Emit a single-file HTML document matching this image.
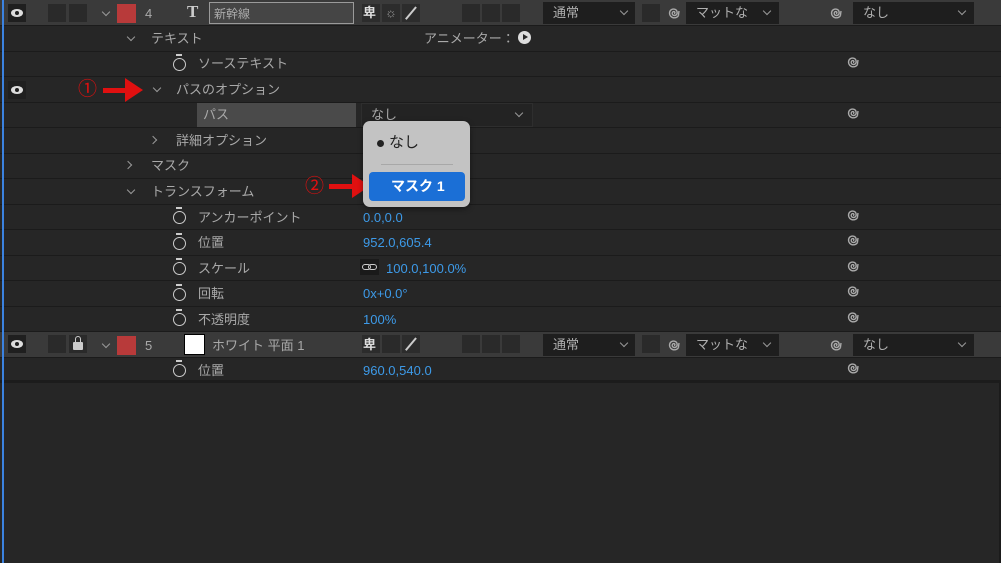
<!DOCTYPE html>
<html><head><meta charset="utf-8"><style>
*{margin:0;padding:0;box-sizing:border-box}
body{width:1001px;height:563px;background:#262626;position:relative;overflow:hidden;font-family:"Liberation Sans","Noto Sans CJK JP",sans-serif;font-size:13px;color:#a9a9a9}
.a{position:absolute}
.row{position:absolute;left:0;width:1001px;background:#262626;border-bottom:1px solid #1b1b1b}
.lay{background:#3a3a3a}
.t{position:absolute;white-space:nowrap;line-height:14px}
.b{color:#3d9ae8}
.sq{position:absolute;width:18px;height:18px;background:#2a2a2a}
.dd{position:absolute;background:#1e1e1e;height:22px;color:#b0b0b0;padding-left:10px;line-height:22px}
.chev{position:absolute;width:6px;height:6px;border-right:1.3px solid #999;border-bottom:1.3px solid #999;transform:rotate(45deg)}
.chr{position:absolute;width:6px;height:6px;border-right:1.3px solid #999;border-bottom:1.3px solid #999;transform:rotate(-45deg)}
.eye{position:absolute;width:18px;height:18px;background:#1f1f1f}
.eye:after{content:"";position:absolute;left:3px;top:5px;width:12px;height:8px;border-radius:50%;background:#ddd}
.eye:before{content:"";position:absolute;left:7px;top:7px;width:4px;height:4px;border-radius:50%;background:#1f1f1f;z-index:2}
.sw1{position:absolute;width:13px;height:13px;border:1.5px solid #ccc;border-radius:50%}
.sw1:before{content:"";position:absolute;left:2px;top:-5px;width:6px;height:2px;background:#ccc}
.sp{position:absolute;width:14px;height:14px}
</style></head><body>
<svg width="0" height="0" style="position:absolute"><defs><symbol id="s" viewBox="0 0 14 14"><path d="M7 7.5 C8 7.5 8.3 6 7.2 5.6 C5.8 5.2 5 6.6 5.3 8 C5.7 9.6 8 10 9.3 8.8 C10.8 7.3 10.3 4.3 8.2 3.4 C5.8 2.4 3 3.6 2.6 6.4 C2.2 9.4 4.4 11.8 7.4 11.8 C9 11.8 10.6 11 11.4 9.6 M11.4 9.6 L12 5" fill="none" stroke="#aaa" stroke-width="1.4"/></symbol></defs></svg>
<div class="a" style="left:2px;top:0;width:1.5px;height:563px;background:#3b82e0;z-index:9"></div>
<div class="a" style="right:0;top:0;width:2px;height:563px;background:#1b1b1b"></div>

<!-- row 4 layer -->
<div class="row lay" style="top:0;height:26px"></div>
<div class="eye" style="left:8px;top:4px"></div>
<div class="sq" style="left:48px;top:4px"></div><div class="sq" style="left:69px;top:4px"></div>
<div class="chev" style="left:103px;top:9px"></div>
<div class="a" style="left:117px;top:4px;width:19px;height:19px;background:#b83a3a"></div>
<div class="t" style="left:145px;top:7px">4</div>
<div class="t" style="left:187px;top:5px;font-family:'Liberation Serif',serif;font-size:17px;font-weight:bold;color:#ccc">T</div>
<div class="a" style="left:209px;top:2px;width:145px;height:22px;border:1.5px solid #9a9a9a;background:#454545"></div>
<div class="t" style="left:214px;top:7px;font-size:12px;color:#aaa">新幹線</div>
<div class="sq" style="left:362px;top:4px;background:#2c2c2c"></div><div class="t" style="left:363px;top:6px;color:#ddd;font-weight:bold">卑</div>
<div class="sq" style="left:382px;top:4px;background:#2c2c2c"></div><div class="t" style="left:385px;top:6px;color:#999">☼</div>
<div class="sq" style="left:402px;top:4px;background:#2c2c2c"></div><div class="a" style="left:410px;top:5px;width:1.5px;height:16px;background:#ccc;transform:rotate(40deg)"></div>
<div class="sq" style="left:462px;top:4px"></div><div class="sq" style="left:482px;top:4px"></div><div class="sq" style="left:502px;top:4px"></div>
<div class="dd" style="left:543px;top:2px;width:92px">通常</div><div class="chev" style="left:621px;top:8px"></div>
<div class="sq" style="left:642px;top:4px"></div>
<svg class="sp" style="left:667px;top:6px"><use href="#s"/></svg>
<div class="dd" style="left:686px;top:2px;width:93px">マットな</div><div class="chev" style="left:764px;top:8px"></div>
<svg class="sp" style="left:829px;top:6px"><use href="#s"/></svg>
<div class="dd" style="left:853px;top:2px;width:121px">なし</div><div class="chev" style="left:959px;top:8px"></div>

<!-- sub rows -->
<div class="row" style="top:26px;height:26px"></div>
<div class="chev" style="left:128px;top:34px"></div>
<div class="t" style="left:151px;top:32px">テキスト</div>
<div class="t" style="left:424px;top:32px">アニメーター：</div>
<div class="a" style="left:518px;top:31px;width:13px;height:13px;border-radius:50%;background:#ddd"></div>
<div class="a" style="left:523px;top:34px;border-left:5px solid #262626;border-top:3.5px solid transparent;border-bottom:3.5px solid transparent"></div>

<div class="row" style="top:52px;height:25px"></div>
<div class="sw1" style="left:173px;top:58px"></div>
<div class="t" style="left:198px;top:57px">ソーステキスト</div>
<svg class="sp" style="left:846px;top:55px"><use href="#s"/></svg>

<div class="row" style="top:77px;height:26px"></div>
<div class="eye" style="left:8px;top:81px"></div>
<div class="t" style="left:78px;top:80px;color:#e01010;font-size:19px;line-height:20px">①</div>
<div class="a" style="left:103px;top:88px;width:24px;height:5px;background:#e01010"></div>
<div class="a" style="left:125px;top:78px;border-left:18px solid #e01010;border-top:12px solid transparent;border-bottom:12px solid transparent"></div>
<div class="chev" style="left:154px;top:85px"></div>
<div class="t" style="left:176px;top:83px">パスのオプション</div>

<div class="row" style="top:103px;height:25px"></div>
<div class="a" style="left:197px;top:103px;width:159px;height:24px;background:#4a4a4a"></div>
<div class="t" style="left:203px;top:108px">パス</div>
<div class="a" style="left:361px;top:103px;width:172px;height:24px;background:#232323;border:1px solid #2e2e2e"></div>
<div class="t" style="left:371px;top:108px">なし</div>
<div class="chev" style="left:516px;top:110px"></div>
<svg class="sp" style="left:846px;top:106px"><use href="#s"/></svg>

<div class="row" style="top:128px;height:26px"></div>
<div class="chr" style="left:150px;top:137px"></div>
<div class="t" style="left:176px;top:134px">詳細オプション</div>

<div class="row" style="top:154px;height:25px"></div>
<div class="chr" style="left:125px;top:162px"></div>
<div class="t" style="left:151px;top:159px">マスク</div>

<div class="row" style="top:179px;height:26px"></div>
<div class="chev" style="left:128px;top:187px"></div>
<div class="t" style="left:151px;top:185px">トランスフォーム</div>
<div class="t" style="left:305px;top:177px;color:#e01010;font-size:19px;line-height:20px">②</div>
<div class="a" style="left:329px;top:184px;width:24px;height:5px;background:#e01010"></div>
<div class="a" style="left:352px;top:174px;border-left:18px solid #e01010;border-top:12px solid transparent;border-bottom:12px solid transparent"></div>

<div class="row" style="top:205px;height:25px"></div>
<div class="sw1" style="left:173px;top:211px"></div>
<div class="t" style="left:198px;top:211px">アンカーポイント</div>
<div class="t b" style="left:363px;top:211px">0.0,0.0</div>
<svg class="sp" style="left:846px;top:208px"><use href="#s"/></svg>

<div class="row" style="top:230px;height:26px"></div>
<div class="sw1" style="left:173px;top:237px"></div>
<div class="t" style="left:198px;top:236px">位置</div>
<div class="t b" style="left:363px;top:236px">952.0,605.4</div>
<svg class="sp" style="left:846px;top:233px"><use href="#s"/></svg>

<div class="row" style="top:256px;height:25px"></div>
<div class="sw1" style="left:173px;top:262px"></div>
<div class="t" style="left:198px;top:262px">スケール</div>
<div class="a" style="left:360px;top:259px;width:19px;height:16px;background:#1a1a1a"></div>
<div class="a" style="left:362px;top:264px;width:9px;height:6px;border:1.5px solid #ccc;border-radius:3px"></div>
<div class="a" style="left:368px;top:264px;width:9px;height:6px;border:1.5px solid #ccc;border-radius:3px"></div>
<div class="t b" style="left:386px;top:262px">100.0,100.0%</div>
<svg class="sp" style="left:846px;top:259px"><use href="#s"/></svg>

<div class="row" style="top:281px;height:26px"></div>
<div class="sw1" style="left:173px;top:288px"></div>
<div class="t" style="left:198px;top:287px">回転</div>
<div class="t b" style="left:363px;top:287px">0x+0.0°</div>
<svg class="sp" style="left:846px;top:284px"><use href="#s"/></svg>

<div class="row" style="top:307px;height:25px"></div>
<div class="sw1" style="left:173px;top:313px"></div>
<div class="t" style="left:198px;top:313px">不透明度</div>
<div class="t b" style="left:363px;top:313px">100%</div>
<svg class="sp" style="left:846px;top:310px"><use href="#s"/></svg>

<!-- layer 5 -->
<div class="row lay" style="top:332px;height:26px"></div>
<div class="eye" style="left:8px;top:335px"></div>
<div class="sq" style="left:48px;top:335px"></div>
<div class="sq" style="left:69px;top:335px"></div>
<div class="a" style="left:73px;top:342px;width:10px;height:8px;background:#ccc;border-radius:1px"></div>
<div class="a" style="left:75px;top:336px;width:6px;height:8px;border:1.5px solid #ccc;border-radius:3px 3px 0 0"></div>
<div class="chev" style="left:103px;top:341px"></div>
<div class="a" style="left:117px;top:336px;width:19px;height:19px;background:#b83a3a"></div>
<div class="t" style="left:145px;top:339px">5</div>
<div class="a" style="left:184px;top:334px;width:21px;height:21px;background:#fff;border:1px solid #000"></div>
<div class="t" style="left:212px;top:339px">ホワイト 平面 1</div>
<div class="sq" style="left:362px;top:335px;background:#2c2c2c"></div><div class="t" style="left:363px;top:338px;color:#ddd;font-weight:bold">卑</div>
<div class="sq" style="left:382px;top:335px"></div>
<div class="sq" style="left:402px;top:335px;background:#2c2c2c"></div><div class="a" style="left:410px;top:336px;width:1.5px;height:16px;background:#ccc;transform:rotate(40deg)"></div>
<div class="sq" style="left:462px;top:335px"></div><div class="sq" style="left:482px;top:335px"></div><div class="sq" style="left:502px;top:335px"></div>
<div class="dd" style="left:543px;top:334px;width:92px">通常</div><div class="chev" style="left:621px;top:340px"></div>
<div class="sq" style="left:642px;top:335px"></div>
<svg class="sp" style="left:667px;top:338px"><use href="#s"/></svg>
<div class="dd" style="left:686px;top:334px;width:93px">マットな</div><div class="chev" style="left:764px;top:340px"></div>
<svg class="sp" style="left:829px;top:338px"><use href="#s"/></svg>
<div class="dd" style="left:853px;top:334px;width:121px">なし</div><div class="chev" style="left:959px;top:340px"></div>

<div class="row" style="top:358px;height:25px;border-bottom:3px solid #1c1c1c"></div>
<div class="sw1" style="left:173px;top:364px"></div>
<div class="t" style="left:198px;top:364px">位置</div>
<div class="t b" style="left:363px;top:364px">960.0,540.0</div>
<svg class="sp" style="left:846px;top:361px"><use href="#s"/></svg>

<!-- popup -->
<div class="a" style="left:363px;top:121px;width:107px;height:86px;background:#c3c3c3;border-radius:7px;box-shadow:0 2px 6px rgba(0,0,0,.4)"></div>
<div class="a" style="left:377px;top:140px;width:7px;height:7px;border-radius:50%;background:#222"></div>
<div class="t" style="left:389px;top:134px;color:#222;font-size:15px;line-height:18px">なし</div>
<div class="a" style="left:381px;top:164px;width:72px;height:1px;background:#a8a8a8"></div>
<div class="a" style="left:369px;top:172px;width:96px;height:29px;background:#1b6fd6;border-radius:4px"></div>
<div class="t" style="left:391px;top:178px;color:#fff;font-size:14px;font-weight:bold;line-height:17px">マスク 1</div>
</body></html>
